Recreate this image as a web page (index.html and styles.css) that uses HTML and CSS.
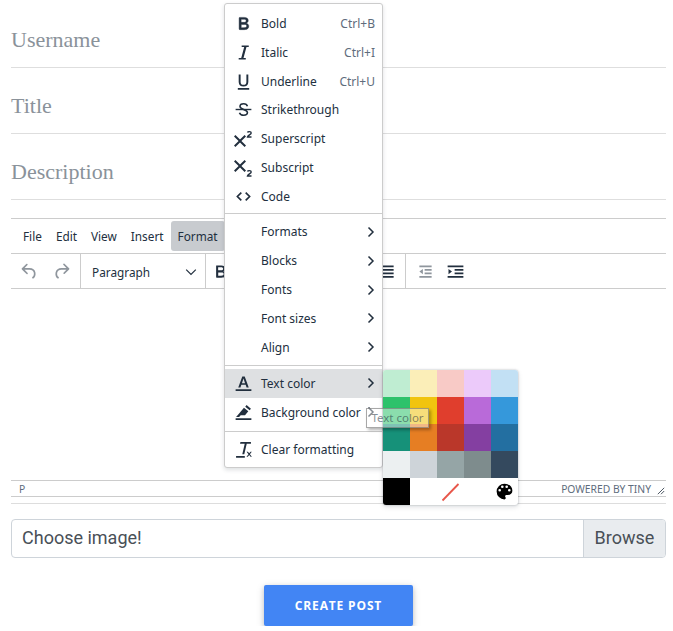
FILE: index.html
```html
<!DOCTYPE html>
<html lang="en">
<head>
  <meta charset="UTF-8">
  <meta name="viewport" content="width=device-width, initial-scale=1.0">
  <title>Create Post</title>
  <link rel="stylesheet" href="styles.css">
</head>
<body>
  <div class="page">
    <div class="field">Username</div>
    <div class="field">Title</div>
    <div class="field">Description</div>

    <!-- Editor -->
    <div class="editor">
      <div class="menubar">
        <span class="menubar-item">File</span>
        <span class="menubar-item">Edit</span>
        <span class="menubar-item">View</span>
        <span class="menubar-item">Insert</span>
        <span class="menubar-item active">Format</span>
      </div>
      <div class="toolbar">
        <div class="tool-group history">
          <svg class="tool-icon muted" viewBox="0 0 24 24"><path d="M6.4 8H12c3.7 0 6.2 2 6.8 5.1.6 2.7-.4 5.6-2.3 6.8a1 1 0 0 1-1-1.8c1.1-.6 1.8-2.7 1.4-4.6-.5-2.1-2.1-3.5-4.9-3.5H6.4l3.3 3.3a1 1 0 1 1-1.4 1.4l-5-5a1 1 0 0 1 0-1.4l5-5a1 1 0 0 1 1.4 1.4L6.4 8z"/></svg>
          <svg class="tool-icon muted" viewBox="0 0 24 24"><path d="M17.6 10H12c-2.8 0-4.4 1.4-4.9 3.5-.4 2 .3 4 1.4 4.6a1 1 0 1 1-1 1.8c-2-1.2-2.9-4.1-2.3-6.8C6 10 8.3 8 12 8h5.6l-3.3-3.3a1 1 0 1 1 1.4-1.4l5 5a1 1 0 0 1 0 1.4l-5 5a1 1 0 0 1-1.4-1.4l3.3-3.3z"/></svg>
        </div>
        <div class="tool-group blocks">
          <span>Paragraph</span>
          <svg class="caret" viewBox="0 0 10 10"><path d="M1 3l4 4 4-4" fill="none" stroke="#222f3e" stroke-width="1"/></svg>
        </div>
        <div class="tool-group formatting">
          <svg class="tool-icon" viewBox="0 0 24 24"><path d="M7.8 19c-.3 0-.5 0-.6-.2l-.2-.5V5.7c0-.2 0-.4.2-.5l.6-.2h5c1.5 0 2.7.3 3.5 1 .7.6 1.1 1.4 1.1 2.5a3 3 0 0 1-.6 1.9c-.4.6-1 1-1.6 1.2.4.1.9.3 1.3.6s.8.7 1 1.2c.4.4.5 1 .5 1.6 0 1.3-.4 2.3-1.3 3-.8.7-2.1 1-3.8 1H7.8zm5-8.3c.6 0 1.2-.1 1.6-.5.4-.3.6-.7.6-1.3 0-1.1-.8-1.7-2.3-1.7H9.3v3.5h3.4zm.5 6c.7 0 1.3-.1 1.7-.4.4-.4.6-.9.6-1.5s-.2-1-.7-1.4c-.4-.3-1-.4-2-.4H9.4v3.8h4z"/></svg>
          <svg class="tool-icon" viewBox="0 0 24 24"><path d="M5 5h14v2H5zM5 9h14v2H5zM5 13h14v2H5zM5 17h14v2H5z"/></svg>
        </div>
        <div class="tool-group indent">
          <svg class="tool-icon muted" viewBox="0 0 24 24"><path d="M5 5h14v2H5zM11 9h8v2h-8zM11 13h8v2h-8zM5 17h14v2H5zM9 9v6l-4-3z"/></svg>
          <svg class="tool-icon" viewBox="0 0 24 24"><path d="M3 5h18v2H3zM11 9h10v2H11zM11 13h10v2H11zM3 17h18v2H3zM4 9l4 3-4 3z"/></svg>
        </div>
      </div>
      <div class="editor-body"></div>
      <div class="statusbar">
        <span class="path">P</span>
        <span class="branding">POWERED BY TINY</span>
        <svg class="resize" viewBox="0 0 10 10"><path d="M1 9l8-8M5 9l4-4" fill="none" stroke="#222f3e" stroke-width="1"/></svg>
      </div>
    </div>

    <!-- File input -->
    <div class="file-input">
      <span class="file-label">Choose image!</span>
      <span class="file-browse">Browse</span>
    </div>

    <div class="actions">
      <button class="submit">CREATE POST</button>
    </div>
  </div>

  <!-- Format menu -->
  <div class="menu">
    <div class="menu-group first">
      <div class="menu-item">
        <svg class="menu-icon" viewBox="0 0 24 24"><path d="M7.8 19c-.3 0-.5 0-.6-.2l-.2-.5V5.7c0-.2 0-.4.2-.5l.6-.2h5c1.5 0 2.7.3 3.5 1 .7.6 1.1 1.4 1.1 2.5a3 3 0 0 1-.6 1.9c-.4.6-1 1-1.6 1.2.4.1.9.3 1.3.6s.8.7 1 1.2c.4.4.5 1 .5 1.6 0 1.3-.4 2.3-1.3 3-.8.7-2.1 1-3.8 1H7.8zm5-8.3c.6 0 1.2-.1 1.6-.5.4-.3.6-.7.6-1.3 0-1.1-.8-1.7-2.3-1.7H9.3v3.5h3.4zm.5 6c.7 0 1.3-.1 1.7-.4.4-.4.6-.9.6-1.5s-.2-1-.7-1.4c-.4-.3-1-.4-2-.4H9.4v3.8h4z" stroke="#222f3e" stroke-width=".5"/></svg>
        <span class="menu-label">Bold</span><span class="shortcut">Ctrl+B</span>
      </div>
      <div class="menu-item">
        <svg class="menu-icon" viewBox="0 0 24 24"><path d="M18 4v1.6h-2.6L12 18.400h2.600V20H6.500v-1.600h2.900L12.800 5.600h-2.900V4z"/></svg>
        <span class="menu-label">Italic</span><span class="shortcut">Ctrl+I</span>
      </div>
      <div class="menu-item">
        <svg class="menu-icon" viewBox="0 0 24 24"><path d="M6.500 4h2.200v8.500c0 2.200 1.200 3.300 3.300 3.300s3.300-1.100 3.300-3.300V4h2.200v8.500c0 3.400-2.200 5.300-5.500 5.300s-5.500-1.900-5.500-5.300V4zM5.500 19.500h13v1.900h-13z"/></svg>
        <span class="menu-label">Underline</span><span class="shortcut">Ctrl+U</span>
      </div>
      <div class="menu-item">
        <svg class="menu-icon" viewBox="0 0 24 24"><path d="M3 11.200h18v1.600H3z"/><path d="M16.500 8.200C16 6.500 14.400 5.500 12.200 5.500c-2.500 0-4.200 1.200-4.200 3 0 3.800 8.500 3 8.500 7 0 1.900-1.800 3-4.300 3-2.500 0-4.200-1-4.800-2.900" fill="none" stroke="#222f3e" stroke-width="1.800"/></svg>
        <span class="menu-label">Strikethrough</span>
      </div>
      <div class="menu-item">
        <svg class="menu-icon wide" viewBox="0 0 24 24"><path d="M15 9.400L10.400 14l4.600 4.600-1.400 1.400L9 15.400 4.400 20 3 18.600 7.600 14 3 9.400 4.400 8 9 12.600 13.600 8 15 9.400z"/><path d="M16.500 5.500c.3-1.200 3.700-1.300 3.700.5 0 1.500-3.300 2.300-3.700 4h4" fill="none" stroke="#222f3e" stroke-width="1.400"/></svg>
        <span class="menu-label">Superscript</span>
      </div>
      <div class="menu-item">
        <svg class="menu-icon wide" viewBox="0 0 24 24"><path d="M15 5.400L10.400 10l4.600 4.600-1.400 1.400L9 11.400 4.400 16 3 14.600 7.600 10 3 5.400 4.400 4 9 8.600 13.600 4 15 5.400z"/><path d="M16.500 15.500c.3-1.200 3.700-1.300 3.700.5 0 1.500-3.300 2.300-3.700 4h4" fill="none" stroke="#222f3e" stroke-width="1.400"/></svg>
        <span class="menu-label">Subscript</span>
      </div>
      <div class="menu-item">
        <svg class="menu-icon" viewBox="0 0 24 24"><path d="M9.500 7.500L5 12l4.500 4.500M14.500 7.500L19 12l-4.500 4.500" fill="none" stroke="#222f3e" stroke-width="1.900"/></svg>
        <span class="menu-label">Code</span>
      </div>
    </div>
    <div class="menu-group middle">
      <div class="menu-item"><span class="menu-gap"></span><span class="menu-label">Formats</span><svg class="chevron" viewBox="0 0 10 12"><path d="M2.500 1.500L7 6l-4.500 4.500" fill="none" stroke="#222f3e" stroke-width="1.500"/></svg></div>
      <div class="menu-item"><span class="menu-gap"></span><span class="menu-label">Blocks</span><svg class="chevron" viewBox="0 0 10 12"><path d="M2.500 1.500L7 6l-4.500 4.500" fill="none" stroke="#222f3e" stroke-width="1.500"/></svg></div>
      <div class="menu-item"><span class="menu-gap"></span><span class="menu-label">Fonts</span><svg class="chevron" viewBox="0 0 10 12"><path d="M2.500 1.500L7 6l-4.500 4.500" fill="none" stroke="#222f3e" stroke-width="1.500"/></svg></div>
      <div class="menu-item"><span class="menu-gap"></span><span class="menu-label">Font sizes</span><svg class="chevron" viewBox="0 0 10 12"><path d="M2.500 1.500L7 6l-4.500 4.500" fill="none" stroke="#222f3e" stroke-width="1.500"/></svg></div>
      <div class="menu-item"><span class="menu-gap"></span><span class="menu-label">Align</span><svg class="chevron" viewBox="0 0 10 12"><path d="M2.500 1.500L7 6l-4.500 4.500" fill="none" stroke="#222f3e" stroke-width="1.500"/></svg></div>
    </div>
    <div class="menu-group colors">
      <div class="menu-item selected">
        <svg class="menu-icon" viewBox="0 0 24 24"><path d="M3 18.500h18v2.200H3zM10.600 4h2.800l4.600 12.500h-2.500l-1-3H9.500l-1 3H6zm3.200 7.600L12 6.300l-1.800 5.300z"/></svg>
        <span class="menu-label">Text color</span>
        <svg class="chevron" viewBox="0 0 10 12"><path d="M2.500 1.500L7 6l-4.500 4.500" fill="none" stroke="#222f3e" stroke-width="1.500"/></svg>
      </div>
      <div class="menu-item">
        <svg class="menu-icon" viewBox="0 0 24 24"><path d="M3 18.500h18v2.200H3zM15.500 3.500l5 4.200-1.500 1.800-5-4.200zM12.500 6.500l5 4.200-3.800 4.500H8.800L7 17H3.500l3.500-4z"/></svg>
        <span class="menu-label">Background color</span>
        <svg class="chevron" viewBox="0 0 10 12"><path d="M2.500 1.500L7 6l-4.500 4.500" fill="none" stroke="#222f3e" stroke-width="1.500"/></svg>
      </div>
    </div>
    <div class="menu-group last">
      <div class="menu-item">
        <svg class="menu-icon" viewBox="0 0 24 24"><path d="M8.500 3.500h12v2h-4.800l-2.800 12H10.600l2.800-12H8zM3.500 19.500h10v1.800h-10zM15.500 14.500h1.500l1.500 1.900 1.500-1.900h1.500l-2.200 2.800 2.300 2.900h-1.500l-1.600-2-1.600 2h-1.500l2.300-2.900z"/></svg>
        <span class="menu-label">Clear formatting</span>
      </div>
    </div>
  </div>

  <!-- Text color swatches -->
  <div class="palette">
    <span class="swatch c1"></span><span class="swatch c2"></span><span class="swatch c3"></span><span class="swatch c4"></span><span class="swatch c5"></span>
    <span class="swatch c6"></span><span class="swatch c7"></span><span class="swatch c8"></span><span class="swatch c9"></span><span class="swatch c10"></span>
    <span class="swatch c11"></span><span class="swatch c12"></span><span class="swatch c13"></span><span class="swatch c14"></span><span class="swatch c15"></span>
    <span class="swatch c16"></span><span class="swatch c17"></span><span class="swatch c18"></span><span class="swatch c19"></span><span class="swatch c20"></span>
    <span class="swatch c21"></span>
    <span class="swatch"></span>
    <span class="swatch"><svg viewBox="0 0 27 27"><path d="M5.500 22.500L21.500 6" stroke="#e8564a" stroke-width="1.800" fill="none"/></svg></span>
    <span class="swatch"></span>
    <span class="swatch"><svg viewBox="0 0 24 24"><path d="M12 3a9 9 0 0 0 0 18 1.500 1.500 0 0 0 1.100-2.500c-.2-.3-.4-.6-.4-1 0-.8.7-1.500 1.500-1.500H16a5 5 0 0 0 5-5c0-4.400-4-8-9-8zm-5.500 9a1.500 1.500 0 1 1 0-3 1.500 1.500 0 0 1 0 3zm3-4a1.500 1.500 0 1 1 0-3 1.500 1.500 0 0 1 0 3zm5 0a1.500 1.500 0 1 1 0-3 1.500 1.500 0 0 1 0 3zm3 4a1.500 1.500 0 1 1 0-3 1.500 1.500 0 0 1 0 3z"/></svg></span>
  </div>

  <div class="tooltip">Text color</div>
</body>
</html>
```

FILE: styles.css
```css
body {
  margin: 0;
  background-color: #fff;
  color: #222f3e;
  font-family: 'Noto Sans', 'Open Sans', sans-serif;
}
.page {
  padding: 2px 7px 0 11px;
}
.field {
  height: 65px;
  line-height: 76px;
  border-bottom: 1px solid #dedede;
  font-family: 'Liberation Serif', serif;
  font-size: 22px;
  color: #8a929a;
}

/* editor */
.editor {
  margin-top: 18px;
  border-top: 1px solid #ccc;
  border-bottom: 1px solid #ddd;
  padding-bottom: 6px;
}
.menubar {
  display: flex;
  align-items: center;
  height: 34px;
  padding-left: 5px;
  border-bottom: 1px solid #ccc;
  font-size: 11.8px;
}
.menubar-item {
  height: 30px;
  line-height: 31px;
  padding: 0 7px;
  border-radius: 3px;
}
.menubar-item.active {
  background-color: #c8cbcf;
}
.toolbar {
  display: flex;
  height: 34px;
  border-bottom: 1px solid #ccc;
}
.tool-group {
  display: flex;
  align-items: center;
  box-sizing: border-box;
  border-right: 1px solid #ccc;
}
.tool-group:last-child {
  border-right: 0;
}
.tool-icon {
  width: 21px;
  height: 21px;
  fill: #222f3e;
}
.tool-icon.muted {
  opacity: .5;
}
.history {
  width: 70px;
  padding-left: 8px;
  gap: 11px;
}
.blocks {
  width: 125px;
  padding: 2px 8px 0 11px;
  justify-content: space-between;
  font-size: 11.8px;
}
.caret {
  width: 12px;
  height: 12px;
}
.formatting {
  width: 200px;
  padding: 0 7px 0 4px;
  justify-content: space-between;
}
.indent {
  padding-left: 9px;
  gap: 9px;
}
.editor-body {
  height: 191px;
  border-bottom: 1px solid #ccc;
}
.statusbar {
  display: flex;
  align-items: center;
  height: 15px;
  padding: 0 1px 0 8px;
  border-bottom: 1px solid #ccc;
  font-size: 10.3px;
  color: #5e6c7c;
}
.branding {
  margin-left: auto;
}
.resize {
  width: 8px;
  height: 8px;
  margin-left: 6px;
  margin-top: 4px;
}

/* file input */
.file-input {
  display: flex;
  height: 39px;
  box-sizing: border-box;
  margin-top: 15px;
  border: 1px solid #ced4da;
  border-radius: 4px;
  font-family: Roboto, sans-serif;
  font-size: 18px;
  line-height: 36px;
  color: #495057;
}
.file-label {
  flex: 1;
  padding-left: 10px;
}
.file-browse {
  width: 81px;
  text-align: center;
  background-color: #e9ecef;
  border-left: 1px solid #ced4da;
  border-radius: 0 3px 3px 0;
}
.actions {
  display: flex;
  justify-content: center;
  margin-top: 27px;
}
.submit {
  width: 149px;
  height: 41px;
  border: 0;
  border-radius: 2px;
  background-color: #4285f4;
  color: #fff;
  font-family: 'Open Sans', sans-serif;
  font-size: 12px;
  font-weight: 700;
  letter-spacing: .85px;
  box-shadow: 0 2px 5px rgba(0,0,0,.18), 0 2px 10px rgba(0,0,0,.12);
}

/* format menu */
.menu {
  position: absolute;
  left: 224px;
  top: 3px;
  width: 157px;
  background-color: #fff;
  border: 1px solid #ccc;
  border-radius: 3px;
  box-shadow: 0 2px 4px rgba(34,47,62,.15);
  font-size: 12px;
}
.menu-group {
  border-bottom: 1px solid #ccc;
}
.menu-group.first {
  padding: 5px 0 2px;
}
.menu-group.middle {
  padding: 3.6px 0 3.15px;
}
.menu-group.colors {
  padding: 3px 0 4.3px;
}
.menu-group.last {
  padding: 3.6px 0 2.6px;
  border-bottom: 0;
}
.menu-item {
  display: flex;
  align-items: center;
  height: 28.85px;
  padding: 0 7px 0 8px;
}
.menu-item.selected {
  background-color: #dee0e2;
}
.menu-icon {
  flex: none;
  width: 21px;
  height: 21px;
  margin-right: 7px;
  fill: #222f3e;
}
.menu-icon.wide {
  width: 24px;
  height: 24px;
  margin-left: -2px;
  margin-right: 6px;
}
.menu-gap {
  flex: none;
  width: 28px;
}
.menu-label {
  flex: 1;
  white-space: nowrap;
}
.shortcut {
  color: #5e6c7c;
}
.chevron {
  flex: none;
  width: 10px;
  height: 12px;
  margin-right: -1px;
}

/* color palette */
.palette {
  position: absolute;
  left: 383px;
  top: 370px;
  display: grid;
  grid-template-columns: repeat(5, 27px);
  grid-auto-rows: 27px;
  border-radius: 3px;
  overflow: hidden;
  background-color: #fff;
  box-shadow: 0 0 2px rgba(34,47,62,.35), 0 2px 5px rgba(34,47,62,.15);
}
.swatch {
  display: flex;
  align-items: center;
  justify-content: center;
}
.swatch svg {
  width: 100%;
  height: 100%;
}
.swatch:last-child svg {
  width: 21px;
  height: 21px;
}
.c1 { background-color: #bfedd2; }
.c2 { background-color: #fbeeb8; }
.c3 { background-color: #f8cac6; }
.c4 { background-color: #eccafa; }
.c5 { background-color: #c2e0f4; }
.c6 { background-color: #2dc26b; }
.c7 { background-color: #f1c40f; }
.c8 { background-color: #e03e2d; }
.c9 { background-color: #b96ad9; }
.c10 { background-color: #3598db; }
.c11 { background-color: #169179; }
.c12 { background-color: #e67e23; }
.c13 { background-color: #ba372a; }
.c14 { background-color: #843fa1; }
.c15 { background-color: #236fa1; }
.c16 { background-color: #ecf0f1; }
.c17 { background-color: #ced4d9; }
.c18 { background-color: #95a5a6; }
.c19 { background-color: #7e8c8d; }
.c20 { background-color: #34495e; }
.c21 { background-color: #000; }

/* tooltip, caught mid fade */
.tooltip {
  position: absolute;
  left: 366px;
  top: 408px;
  width: 63px;
  height: 20px;
  box-sizing: border-box;
  border: 1px solid rgba(110,110,110,.6);
  background-color: rgba(255,255,255,.45);
  box-shadow: 2px 2px 3px rgba(0,0,0,.3);
  font-size: 11.5px;
  line-height: 18px;
  text-align: center;
  white-space: nowrap;
  color: rgba(34,47,62,.55);
}
```
